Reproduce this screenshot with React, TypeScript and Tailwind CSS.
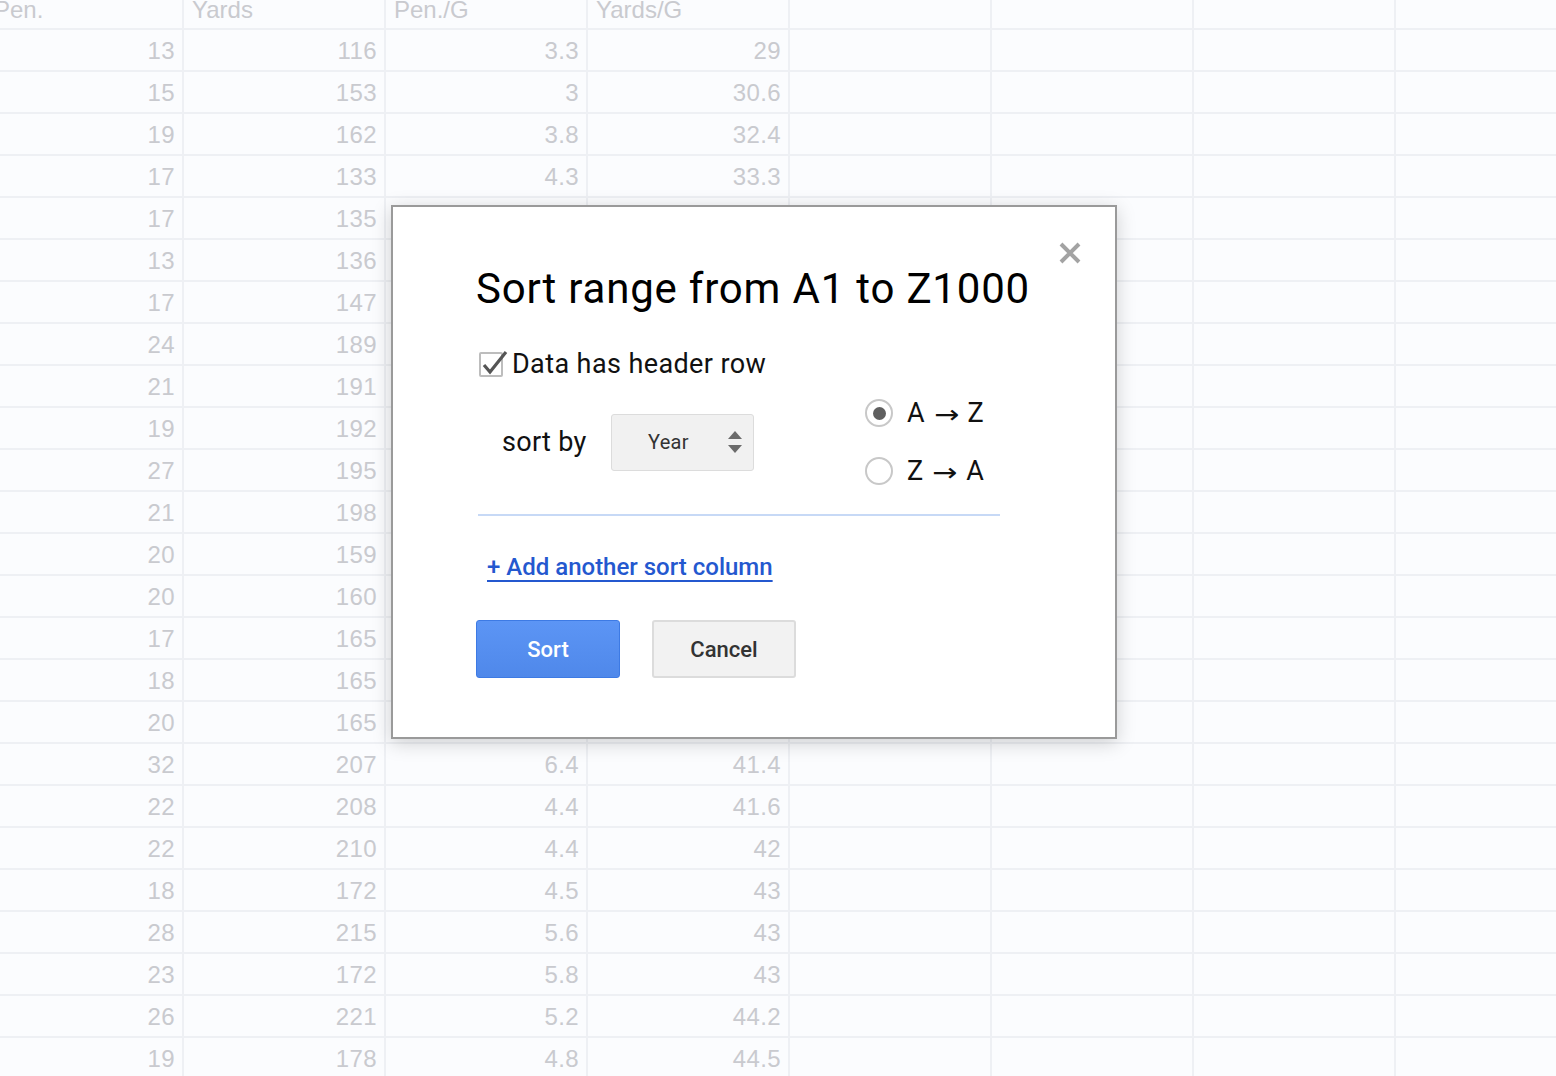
import React from "react";

const rows: [string, string, string, string][] = [
  ["13", "116", "3.3", "29"],
  ["15", "153", "3", "30.6"],
  ["19", "162", "3.8", "32.4"],
  ["17", "133", "4.3", "33.3"],
  ["17", "135", "4.3", "33.8"],
  ["13", "136", "3.3", "34"],
  ["17", "147", "4.3", "36.8"],
  ["24", "189", "4.8", "37.8"],
  ["21", "191", "4.2", "38.2"],
  ["19", "192", "3.8", "38.4"],
  ["27", "195", "5.4", "39"],
  ["21", "198", "4.2", "39.6"],
  ["20", "159", "5", "39.8"],
  ["20", "160", "5", "40"],
  ["17", "165", "4.3", "41.3"],
  ["18", "165", "4.5", "41.3"],
  ["20", "165", "5", "41.3"],
  ["32", "207", "6.4", "41.4"],
  ["22", "208", "4.4", "41.6"],
  ["22", "210", "4.4", "42"],
  ["18", "172", "4.5", "43"],
  ["28", "215", "5.6", "43"],
  ["23", "172", "5.8", "43"],
  ["26", "221", "5.2", "44.2"],
  ["19", "178", "4.8", "44.5"],
];

const headers = ["Pen.", "Yards", "Pen./G", "Yards/G", "", "", "", ""];

function Cell({ first, children, header }: { first?: boolean; children?: React.ReactNode; header?: boolean }) {
  return (
    <div
      className={
        "shrink-0 h-full border-r-2 border-[#eef0f4] flex items-center " +
        (first ? "w-[198px] " : "w-[202px] ") +
        (header ? "justify-start pl-2 pt-[4px]" : "justify-end pr-[7px] pt-[2px] tracking-[0.4px]")
      }
    >
      {children}
    </div>
  );
}

function Sheet() {
  return (
    <div className="-mt-[12px] -ml-[14px] text-[24px] text-[#c9cacf]" style={{ fontFamily: '"Liberation Sans", Arial, sans-serif' }}>
      <div className="flex h-[42px] border-b-2 border-[#eef0f4]">
        {headers.map((h, i) => (
          <Cell key={i} first={i === 0} header>
            {h}
          </Cell>
        ))}
      </div>
      {rows.map((r, i) => (
        <div key={i} className="flex h-[42px] border-b-2 border-[#eef0f4]">
          {[...r, "", "", "", ""].map((v, j) => (
            <Cell key={j} first={j === 0}>
              {v}
            </Cell>
          ))}
        </div>
      ))}
    </div>
  );
}

function Radio({ checked, from, to }: { checked?: boolean; from: string; to: string }) {
  return (
    <div className="flex items-center h-[58px] gap-[14px]">
      <div className="w-[28px] h-[28px] rounded-full border-2 border-[#c8c8c8] bg-white flex items-center justify-center">
        {checked && <div className="w-[13px] h-[13px] rounded-full bg-[#5f5f5f]" />}
      </div>
      <span className="text-[27px] text-[#111] flex items-center">
        {from}
        <span
          className="inline-block mx-[11px] text-[25px] scale-x-[1.2] pt-[3px]"
          style={{ fontFamily: '"DejaVu Sans", sans-serif' }}
        >
          →
        </span>
        {to}
      </span>
    </div>
  );
}

function SortDialog() {
  return (
    <div
      className="absolute left-[391px] top-[205px] w-[726px] h-[534px] bg-white border-2 border-[#9a9a9a] shadow-[0_4px_18px_rgba(0,0,0,0.18)]"
      style={{ fontFamily: 'Roboto, "Liberation Sans", sans-serif' }}
    >
      <button className="absolute right-[33px] top-[34px] w-[24px] h-[24px]">
        <svg viewBox="0 0 24 24" width="24" height="24">
          <path d="M3 3 L21 21 M21 3 L3 21" stroke="#a3a3a3" strokeWidth="4" />
        </svg>
      </button>

      <div className="pl-[83px] pt-[48px] flex flex-col">
        <div className="h-[66px] flex items-center text-[42px] text-black tracking-[0.8px]">Sort range from A1 to Z1000</div>

        <div className="mt-[23px] h-[40px] flex items-center">
          <div className="relative ml-[3px] w-[24px] h-[25px] border-2 border-[#bdbdbd] rounded-[2px] bg-white">
            <svg className="absolute -left-[2px] -top-[8px] overflow-visible" width="30" height="30" viewBox="0 0 30 30">
              <path d="M5 19 L11 26 L27 6" fill="none" stroke="#555" strokeWidth="3.2" />
            </svg>
          </div>
          <span className="ml-[9px] text-[27px] tracking-[0.4px] text-[#111]">Data has header row</span>
        </div>

        <div className="h-[116px] flex items-center">
          <span className="ml-[26px] w-[109px] text-[27px] tracking-[0.3px] text-[#111]">sort by</span>
          <div className="w-[143px] h-[57px] bg-[#f1f1f1] border border-[#dcdcdc] rounded-[3px] flex items-center pl-[36px] pr-[10px] justify-between">
            <span className="text-[20px] tracking-[0.3px] text-[#333]">Year</span>
            <svg width="16" height="26" viewBox="0 0 16 26">
              <path d="M1 10 L8 2 L15 10 Z" fill="#6b6b6b" />
              <path d="M1 16 L8 24 L15 16 Z" fill="#6b6b6b" />
            </svg>
          </div>
          <div className="ml-[111px] flex flex-col">
            <Radio checked from="A" to="Z" />
            <Radio from="Z" to="A" />
          </div>
        </div>

        <div className="mt-[14px] ml-[2px] w-[522px] h-[2px] bg-[#c7d9f6]" />

        <div className="mt-[31px] ml-[11px] h-[40px] flex items-center">
          <a href="#" className="text-[24px] font-medium text-[#2458cf] underline decoration-2 underline-offset-[5px]">
            + Add another sort column
          </a>
        </div>

        <div className="mt-[33px] flex gap-[32px]">
          <button className="w-[144px] h-[58px] rounded-[3px] border border-[#3d7ae4] bg-gradient-to-b from-[#5c95f5] to-[#4f88ea] text-white text-[22px] font-medium">
            Sort
          </button>
          <button className="w-[144px] h-[58px] rounded-[3px] border-2 border-[#dcdcdc] bg-[#f2f2f2] text-[#333] text-[22px] font-medium">
            Cancel
          </button>
        </div>
      </div>
    </div>
  );
}

export default function App() {
  return (
    <div className="relative w-[1556px] h-[1076px] overflow-hidden bg-[#fbfcfe]">
      <Sheet />
      <SortDialog />
    </div>
  );
}
